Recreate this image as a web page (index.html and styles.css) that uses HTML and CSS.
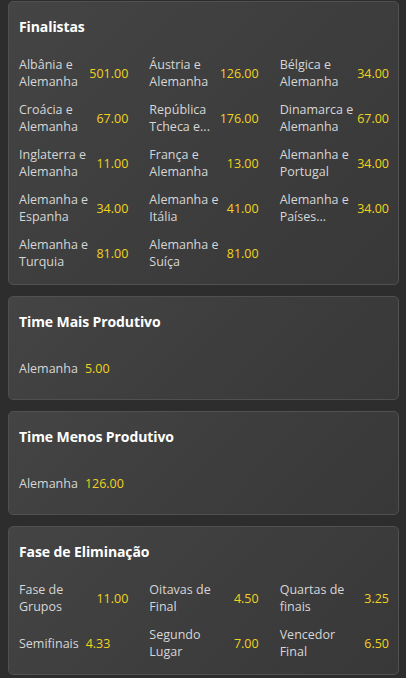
FILE: index.html
```html
<!DOCTYPE html>
<html lang="pt">
<head>
<meta charset="utf-8">
<link rel="stylesheet" href="styles.css">
</head>
<body>
<div class="page">
  <section class="card">
    <h2 class="title">Finalistas</h2>
    <div class="grid">
      <div class="item"><span class="label">Albânia e Alemanha</span><span class="odd">501.00</span></div>
      <div class="item"><span class="label">Áustria e Alemanha</span><span class="odd">126.00</span></div>
      <div class="item"><span class="label">Bélgica e Alemanha</span><span class="odd">34.00</span></div>
      <div class="item"><span class="label">Croácia e Alemanha</span><span class="odd">67.00</span></div>
      <div class="item" title="República Tcheca e Alemanha"><span class="label">República Tcheca e...</span><span class="odd">176.00</span></div>
      <div class="item"><span class="label">Dinamarca e Alemanha</span><span class="odd">67.00</span></div>
      <div class="item"><span class="label">Inglaterra e Alemanha</span><span class="odd">11.00</span></div>
      <div class="item"><span class="label">França e Alemanha</span><span class="odd">13.00</span></div>
      <div class="item"><span class="label">Alemanha e Portugal</span><span class="odd">34.00</span></div>
      <div class="item"><span class="label">Alemanha e Espanha</span><span class="odd">34.00</span></div>
      <div class="item"><span class="label">Alemanha e Itália</span><span class="odd">41.00</span></div>
      <div class="item" title="Alemanha e Países Baixos"><span class="label">Alemanha e Países...</span><span class="odd">34.00</span></div>
      <div class="item"><span class="label">Alemanha e Turquia</span><span class="odd">81.00</span></div>
      <div class="item"><span class="label">Alemanha e Suíça</span><span class="odd">81.00</span></div>
    </div>
  </section>

  <section class="card">
    <h2 class="title">Time Mais Produtivo</h2>
    <div class="grid">
      <div class="item tight"><span class="label">Alemanha</span><span class="odd">5.00</span></div>
    </div>
  </section>

  <section class="card">
    <h2 class="title">Time Menos Produtivo</h2>
    <div class="grid">
      <div class="item tight"><span class="label">Alemanha</span><span class="odd">126.00</span></div>
    </div>
  </section>

  <section class="card">
    <h2 class="title">Fase de Eliminação</h2>
    <div class="grid">
      <div class="item"><span class="label">Fase de Grupos</span><span class="odd">11.00</span></div>
      <div class="item"><span class="label">Oitavas de Final</span><span class="odd">4.50</span></div>
      <div class="item"><span class="label">Quartas de finais</span><span class="odd">3.25</span></div>
      <div class="item tight"><span class="label">Semifinais</span><span class="odd">4.33</span></div>
      <div class="item"><span class="label">Segundo Lugar</span><span class="odd">7.00</span></div>
      <div class="item"><span class="label">Vencedor Final</span><span class="odd">6.50</span></div>
    </div>
  </section>
</div>
</body>
</html>
```

FILE: styles.css
```css
html, body {
  margin: 0;
  padding: 0;
  background: #2d2d2d;
}
body {
  font-family: "Open Sans", "Noto Sans", sans-serif;
  color: #d6d6d6;
}
.page {
  display: flex;
  flex-direction: column;
  gap: 11px;
  padding: 1px 7px 0 8px;
}
.card {
  background: linear-gradient(135deg, #444444 0%, #3d3d3d 55%, #383838 100%);
  border: 1px solid #505050;
  border-radius: 5px;
  padding: 15px 9px 14px 10px;
}
.title {
  margin: 0;
  font-size: 14px;
  line-height: 20px;
  font-weight: 700;
  color: #ffffff;
  letter-spacing: -0.1px;
}
.grid {
  display: grid;
  grid-template-columns: repeat(3, 1fr);
  column-gap: 21px;
  row-gap: 11px;
  margin-top: 19px;
}
.item {
  display: flex;
  align-items: center;
  justify-content: space-between;
  min-height: 34px;
  font-size: 12.5px;
  line-height: 17px;
}
.item.tight {
  justify-content: flex-start;
  gap: 7px;
}
.label {
  max-width: 78px;
}
.odd {
  color: #f0d31e;
  white-space: nowrap;
}
```
